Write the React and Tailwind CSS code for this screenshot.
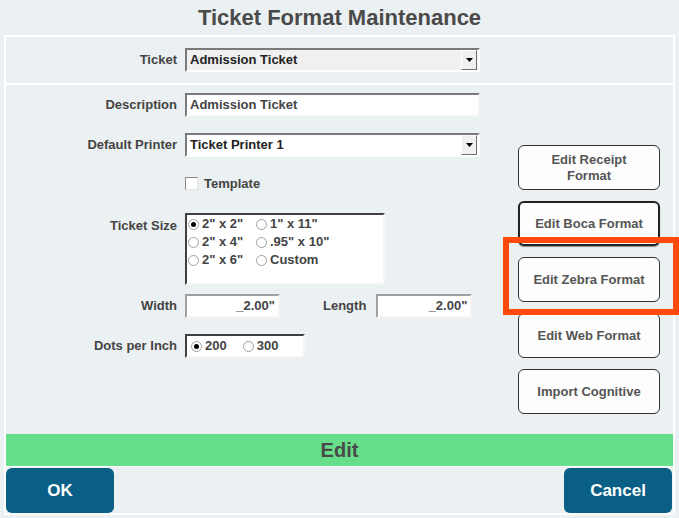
import React from "react";

// Ticket Format Maintenance dialog

const font = "font-['Liberation_Sans',Arial,sans-serif]";

function DropArrow() {
  return (
    <div className="w-[16px] h-full bg-[#f0f0f0] border border-t-white border-l-white border-b-[#707070] border-r-[#707070] flex items-center justify-center">
      <svg width="7" height="4" viewBox="0 0 7 4">
        <path d="M0 0h7L3.5 4z" fill="#000" />
      </svg>
    </div>
  );
}

function Select({ value, bg = "bg-white", width }) {
  return (
    <div className={`${width} h-[24px] ${bg} border-2 border-t-[#7a7a7a] border-l-[#7a7a7a] border-b-white border-r-white flex items-center`}>
      <span className="flex-1 pl-[3px] text-[13px] font-bold text-[#222]">{value}</span>
      <div className="h-[20px] mr-[1px]">
        <DropArrow />
      </div>
    </div>
  );
}

function Radio({ checked, label }) {
  return (
    <div className="flex items-center h-[18px]">
      <span className="w-[11px] h-[11px] rounded-full border border-[#a0a0a0] bg-white flex items-center justify-center">
        {checked && <span className="w-[5px] h-[5px] rounded-full bg-black" />}
      </span>
      <span className="ml-[3px] text-[13px] leading-[16px] font-bold text-[#444]">{label}</span>
    </div>
  );
}

function Label({ children, className = "" }) {
  return (
    <div className={`w-[171px] shrink-0 text-right text-[13px] font-bold text-[#444] ${className}`}>
      {children}
    </div>
  );
}

function SideButton({ children, focused }) {
  return (
    <button
      className={`h-[45px] w-full rounded-[6px] bg-[#fdfdfd] text-[13px] font-bold text-[#555] leading-[16px] ${
        focused ? "border-2 border-[#222] shadow-[0_1px_1px_rgba(0,0,0,0.4)]" : "border border-[#333]"
      }`}
    >
      {children}
    </button>
  );
}

export default function App() {
  return (
    <div className={`w-[679px] h-[518px] bg-[#ebf0f2] relative overflow-hidden ${font}`}>
      <div className="h-[35px] flex items-center justify-center text-[22px] font-bold text-[#4a4a4a]">
        Ticket Format Maintenance
      </div>

      <div className="mx-[4px] h-[480px] border-2 border-white flex flex-col">
        {/* ticket picker */}
        <div className="h-[48px] flex items-center border-b-2 border-white">
          <Label className="text-[#222]">Ticket</Label>
          <div className="ml-[8px]">
            <Select value="Admission Ticket" bg="bg-[#f0f0f0]" width="w-[295px]" />
          </div>
        </div>

        {/* main form */}
        <div className="flex-1 flex">
          <div className="flex-1 flex flex-col pt-[8px]">
            <div className="flex items-center">
              <Label>Description</Label>
              <div className="ml-[8px] w-[295px] h-[24px] bg-white border-2 border-t-[#7a7a7a] border-l-[#7a7a7a] border-b-[#f4f4f4] border-r-[#f4f4f4] flex items-center pl-[3px] text-[13px] font-bold text-[#444]">
                Admission Ticket
              </div>
            </div>

            <div className="flex items-center mt-[16px]">
              <Label>Default Printer</Label>
              <div className="ml-[8px]">
                <Select value="Ticket Printer 1" width="w-[295px]" />
              </div>
            </div>

            <div className="flex items-center h-[13px] mt-[20px]">
              <div className="w-[171px] shrink-0" />
              <span className="ml-[8px] w-[13px] h-[13px] bg-white border border-t-[#8a8a8a] border-l-[#8a8a8a] border-b-[#e4e4e4] border-r-[#e4e4e4]" />
              <span className="ml-[6px] text-[13px] font-bold text-[#444]">Template</span>
            </div>

            <div className="flex items-start mt-[23px]">
              <Label className="pt-[3px]">Ticket Size</Label>
              <div className="ml-[8px] w-[200px] h-[72px] bg-white border-2 border-t-[#404040] border-l-[#404040] border-b-[#f4f4f4] border-r-[#f4f4f4] pl-[1px] grid grid-cols-[68px_auto] content-start">
                <Radio checked label={'2" x 2"'} />
                <Radio label={'1" x 11"'} />
                <Radio label={'2" x 4"'} />
                <Radio label={'.95" x 10"'} />
                <Radio label={'2" x 6"'} />
                <Radio label="Custom" />
              </div>
            </div>

            <div className="flex items-center mt-[9px]">
              <Label>Width</Label>
              <div className="ml-[8px] w-[95px] h-[24px] bg-white border-2 border-t-[#a0a0a0] border-l-[#a0a0a0] border-b-[#f4f4f4] border-r-[#f4f4f4] flex items-center justify-end pr-[3px] text-[13px] font-bold text-[#444]">
                _2.00"
              </div>
              <span className="ml-[43px] text-[13px] font-bold text-[#444]">Length</span>
              <div className="ml-[10px] w-[96px] h-[24px] bg-white border-2 border-t-[#a0a0a0] border-l-[#a0a0a0] border-b-[#f4f4f4] border-r-[#f4f4f4] flex items-center justify-end pr-[3px] text-[13px] font-bold text-[#444]">
                _2.00"
              </div>
            </div>

            <div className="flex items-center mt-[16px]">
              <Label>Dots per Inch</Label>
              <div className="ml-[8px] w-[120px] h-[24px] bg-white border-2 border-t-[#404040] border-l-[#404040] border-b-[#f4f4f4] border-r-[#f4f4f4] flex items-center pl-[4px] gap-[16px]">
                <Radio checked label="200" />
                <Radio label="300" />
              </div>
            </div>
          </div>

          <div className="w-[142px] mr-[13px] pt-[60px] flex flex-col gap-[11px]">
            <SideButton>
              Edit Receipt
              <br />
              Format
            </SideButton>
            <SideButton focused>Edit Boca Format</SideButton>
            <SideButton>Edit Zebra Format</SideButton>
            <SideButton>Edit Web Format</SideButton>
            <SideButton>Import Cognitive</SideButton>
          </div>
        </div>

        {/* status bar */}
        <div className="h-[32px] bg-[#66de8a] flex items-center justify-center text-[20px] font-bold text-[#4a4a4a]">
          Edit
        </div>

        <div className="h-[47px] border-t border-white flex justify-between items-start pt-[1px] pr-[1px]">
          <button className="w-[108px] h-[45px] rounded-[6px] bg-[#0a5f86] text-white text-[17px] font-bold">
            OK
          </button>
          <button className="w-[108px] h-[45px] rounded-[6px] bg-[#0a5f86] text-white text-[17px] font-bold">
            Cancel
          </button>
        </div>
      </div>

      {/* highlight annotation */}
      <div className="absolute left-[503px] top-[237px] w-[176px] h-[78px] border-[6px] border-[#fc4a0c]" />
    </div>
  );
}
